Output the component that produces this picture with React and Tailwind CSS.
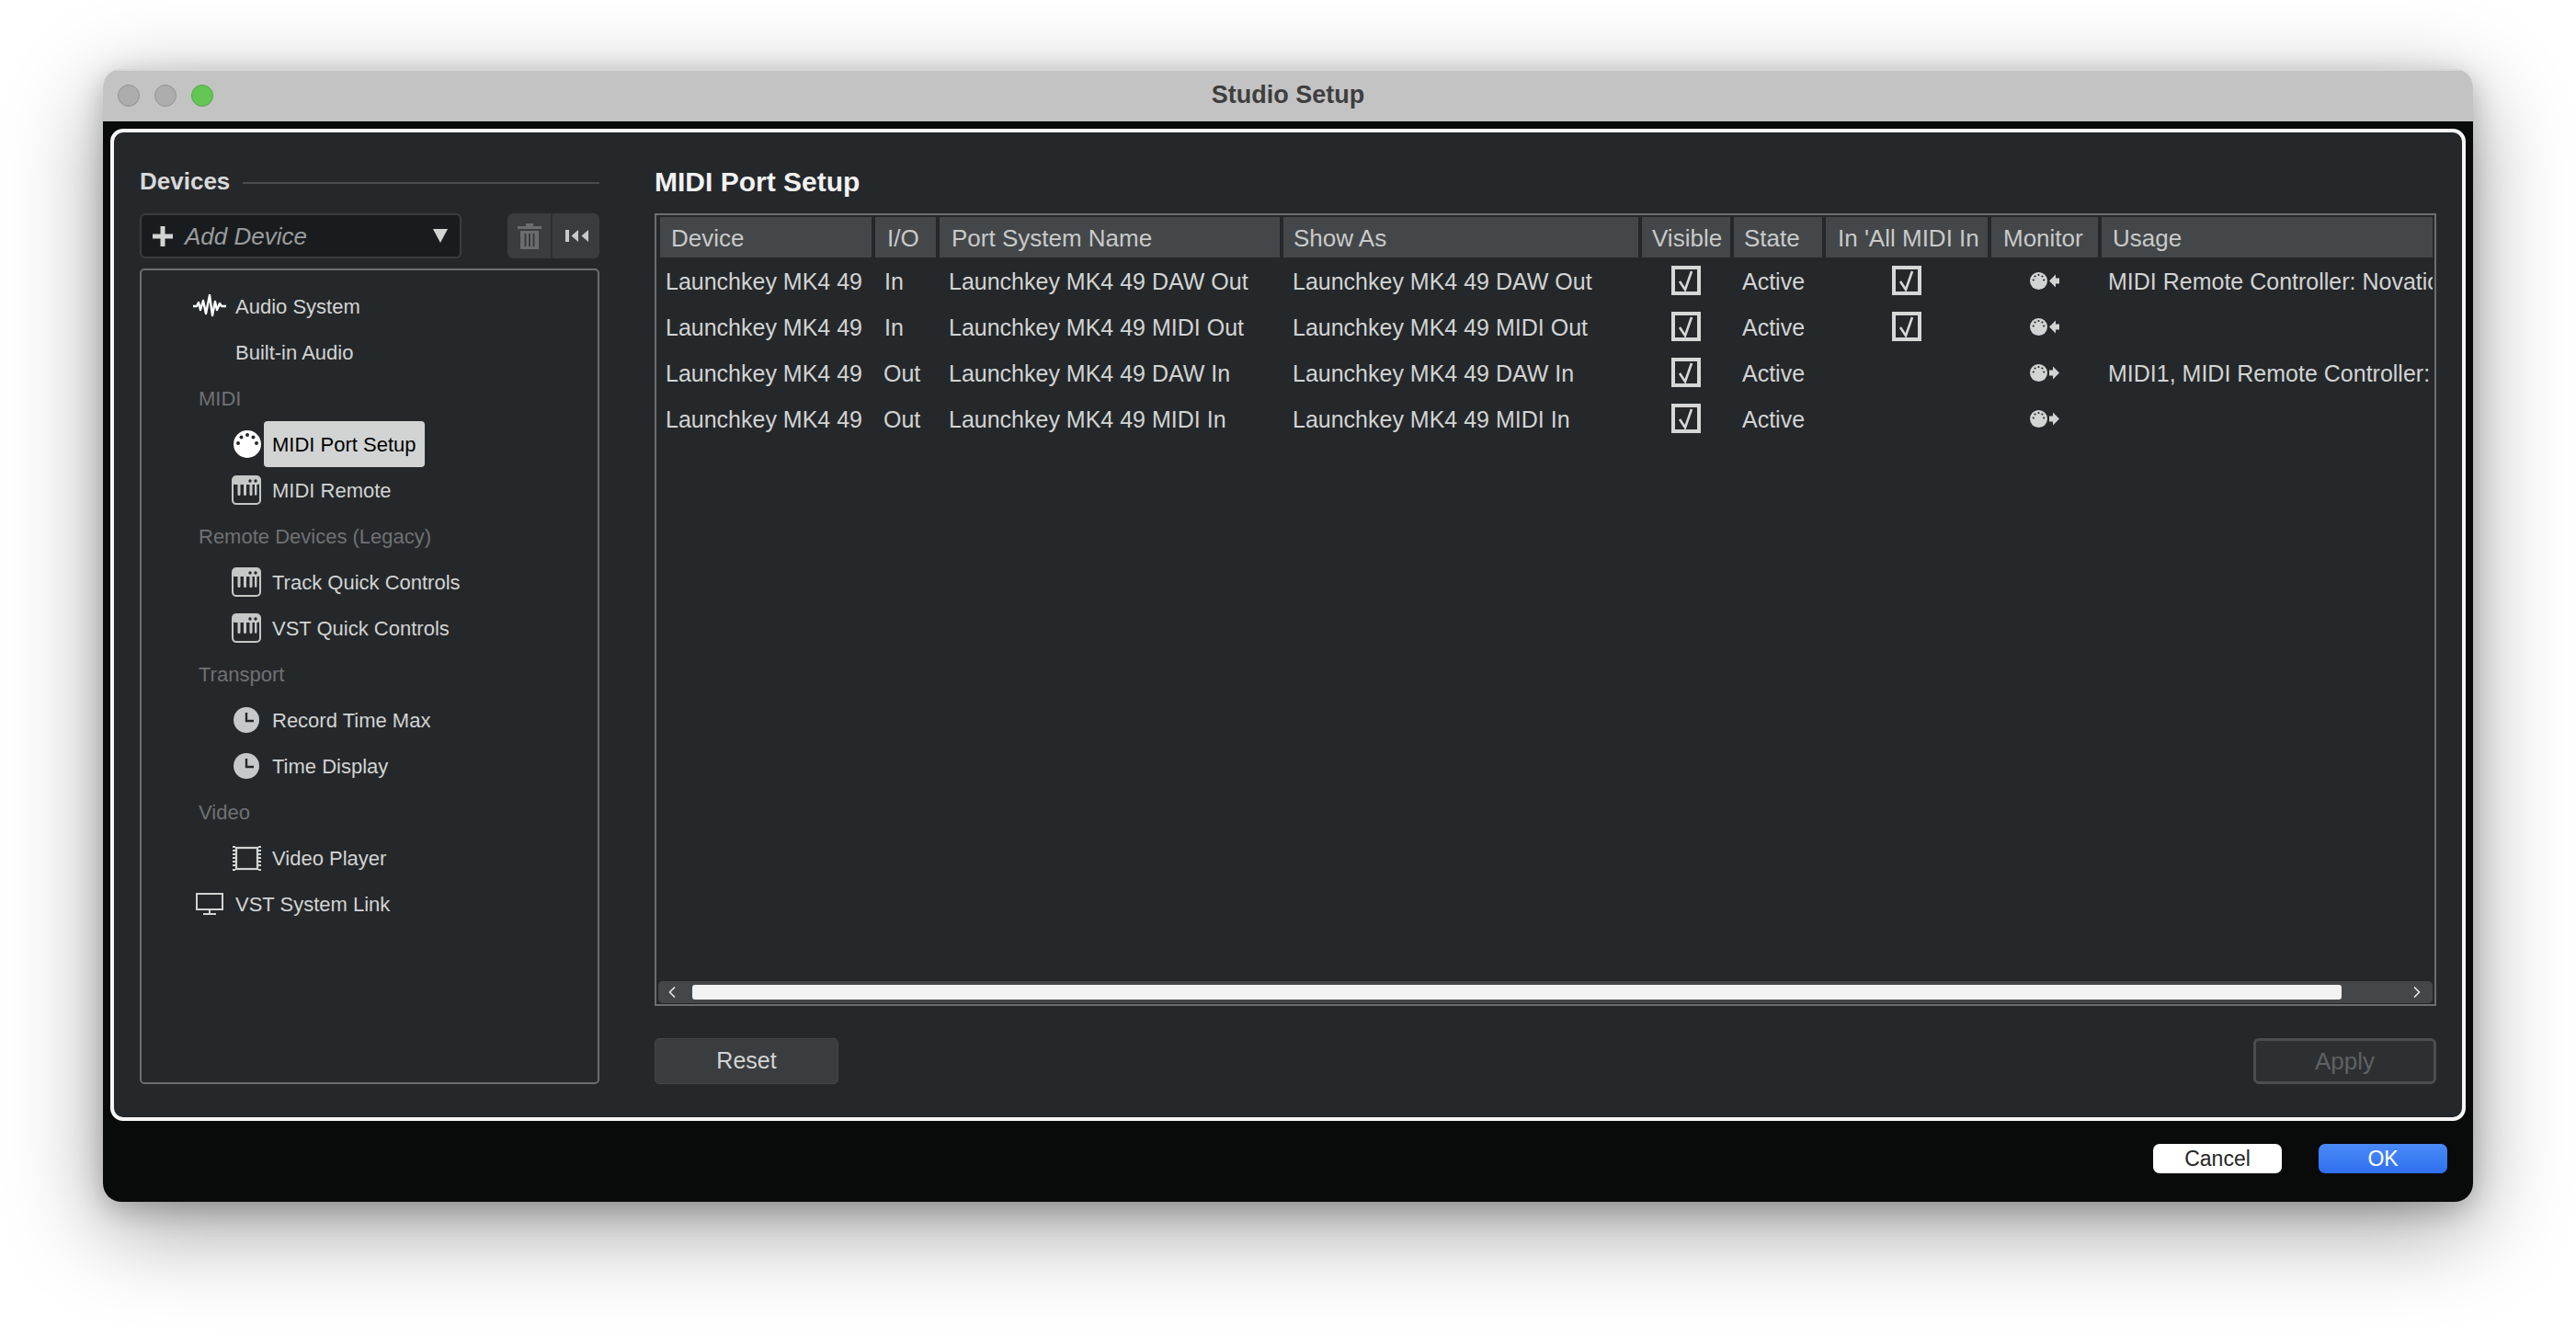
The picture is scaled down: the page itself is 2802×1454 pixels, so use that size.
import React from 'react';

const ports = [
  { name: 'Launchkey MK4 49 DAW Out', io: 'In', all: true, usage: 'MIDI Remote Controller: Novation Launchkey MK4' },
  { name: 'Launchkey MK4 49 MIDI Out', io: 'In', all: true, usage: '' },
  { name: 'Launchkey MK4 49 DAW In', io: 'Out', all: false, usage: 'MIDI1, MIDI Remote Controller: Novation Launchkey MK4' },
  { name: 'Launchkey MK4 49 MIDI In', io: 'Out', all: false, usage: '' },
];

function WaveIcon() {
  return (
    <svg width="36" height="26" viewBox="0 0 36 26" fill="none" stroke="#fff" strokeWidth="2.4" strokeLinejoin="round">
      <path d="M0 13h4l2-4 2 8 3-10 3 14 4-20 3 22 3-15 2 9 3-7 2 3h5" />
    </svg>
  );
}

function MidiIcon() {
  return (
    <svg width="32" height="32" viewBox="0 0 32 32">
      <circle cx="17" cy="16" r="15" fill="#fff" />
      <circle cx="7" cy="15" r="2" fill="#25282b" />
      <circle cx="10.5" cy="8.5" r="2" fill="#25282b" />
      <circle cx="17" cy="6" r="2" fill="#25282b" />
      <circle cx="23.5" cy="8.5" r="2" fill="#25282b" />
      <circle cx="27" cy="15" r="2" fill="#25282b" />
    </svg>
  );
}

function PianoIcon() {
  return (
    <svg width="32" height="32" viewBox="0 0 32 32">
      <rect x="1" y="1" width="30" height="30" rx="4" fill="none" stroke="#c6c8c7" strokeWidth="2" />
      <rect x="1" y="1" width="30" height="9" rx="3" fill="#c6c8c7" />
      <path d="M6.5 9h3v11.5a1.5 1.5 0 0 1-3 0zM13 9h3v11.5a1.5 1.5 0 0 1-3 0zM19.5 9h3v11.5a1.5 1.5 0 0 1-3 0zM25 9h2.4v11.5a1.2 1.2 0 0 1-2.4 0z" fill="#c6c8c7" />
      <circle cx="20" cy="6" r="1.7" fill="#25282b" />
      <circle cx="26" cy="6" r="1.7" fill="#25282b" />
    </svg>
  );
}

function ClockIcon() {
  return (
    <svg width="28" height="28" viewBox="0 0 28 28">
      <circle cx="14" cy="14" r="14" fill="#c6c8ca" />
      <path d="M14 6v9h8" fill="none" stroke="#25282b" strokeWidth="2.4" />
    </svg>
  );
}

function FilmIcon() {
  return (
    <svg width="31" height="29" viewBox="0 0 31 29" fill="none" stroke="#d2d4d3" strokeWidth="2.2">
      <rect x="4" y="3" width="23" height="23" />
      <path d="M0 2h3M0 6h3M0 10h3M0 14h3M0 18h3M0 22h3M0 27h3M28 2h3M28 6h3M28 10h3M28 14h3M28 18h3M28 22h3M28 27h3" />
    </svg>
  );
}

function ScreenIcon() {
  return (
    <svg width="30" height="24" viewBox="0 0 30 24" fill="none" stroke="#d2d4d3" strokeWidth="2">
      <rect x="1" y="1" width="28" height="17" />
      <path d="M15 18v4M8 23h14" />
    </svg>
  );
}

function TreeGroup({ children }) {
  return <div className="h-[50px] flex items-center pl-[62px] text-[#6f7173]">{children}</div>;
}

function TreeTop({ icon, children }) {
  return (
    <div className="h-[50px] flex items-center pl-[56px]">
      <span className="w-[36px] flex justify-center">{icon}</span>
      <span className="ml-[10px]">{children}</span>
    </div>
  );
}

function TreeItem({ icon, active, children }) {
  return (
    <div className="h-[50px] flex items-center pl-[98px]">
      <span className="w-[32px] flex justify-center">{icon}</span>
      <span className={`ml-[3px] h-[50px] flex items-center px-[9px] rounded-[4px] ${active ? 'bg-[#d2d4d3] text-black' : ''}`}>
        {children}
      </span>
    </div>
  );
}

function Check() {
  return (
    <span className="w-[32px] h-[32px] border-[4px] border-[#d6d8d7] flex items-center justify-center">
      <svg width="18" height="24" viewBox="0 0 18 24" fill="none" stroke="#d6d8d7" strokeWidth="2.6">
        <path d="M2 13l6 9 7-20" />
      </svg>
    </span>
  );
}

function MonitorIcon({ out }) {
  return (
    <svg width="32" height="19" viewBox="0 0 32 19">
      <circle cx="9.5" cy="9.5" r="9.5" fill="#d2d4d3" />
      <circle cx="3.8" cy="8.5" r="1.1" fill="#25282b" />
      <circle cx="5.6" cy="4.5" r="1.1" fill="#25282b" />
      <circle cx="9.5" cy="3" r="1.1" fill="#25282b" />
      <circle cx="13.4" cy="4.5" r="1.1" fill="#25282b" />
      <circle cx="15.2" cy="8.5" r="1.1" fill="#25282b" />
      {out ? (
        <path d="M21 6.5h4V2.5l7 7-7 7v-4h-4z" fill="#d2d4d3" />
      ) : (
        <path d="M32 6.5h-4V2.5l-7 7 7 7v-4h4z" fill="#d2d4d3" />
      )}
    </svg>
  );
}

function Head({ className = '', children }) {
  return <div className={`h-[44px] pt-[3px] bg-[#44474a] flex items-center text-[26px] text-[#c8cac9] overflow-hidden whitespace-nowrap ${className}`}>{children}</div>;
}

export default function App() {
  return (
    <div className="w-[2802px] h-[1454px] bg-white pt-[75px] pl-[112px] overflow-hidden font-['Liberation_Sans',Arial,sans-serif]">
      <div className="w-[2578px] h-[1232px] flex flex-col rounded-[20px] overflow-hidden shadow-[0_28px_100px_rgba(0,0,0,0.38),0_8px_30px_rgba(0,0,0,0.22)]">
        {/* title bar */}
        <div className="relative h-[57px] shrink-0 bg-[#c3c3c3] border-t-2 border-[#d8d8d8] flex items-center justify-center">
          <div className="absolute left-[16px] top-[15px] flex gap-[16px]">
            <span className="w-[24px] h-[24px] rounded-full bg-[#adadad] border border-[#939393]"></span>
            <span className="w-[24px] h-[24px] rounded-full bg-[#adadad] border border-[#939393]"></span>
            <span className="w-[24px] h-[24px] rounded-full bg-[#62c554] border border-[#52a845]"></span>
          </div>
          <span className="mb-[2px] text-[27px] font-bold text-[#3e3e3e]">Studio Setup</span>
        </div>

        <div className="flex-1 flex flex-col bg-[#090a0a] px-[8px] pt-[8px]">
          <div className="h-[1079px] shrink-0 flex border-[4px] border-[#f6f6f6] rounded-[14px] bg-[#25282b] pl-[28px] pr-[28px] pb-[36px]">
            {/* devices column */}
            <div className="w-[500px] shrink-0 flex flex-col pt-[36px]">
              <div className="h-[34px] flex items-center gap-[14px] mb-[18px]">
                <span className="text-[26px] font-bold text-[#d8d9d9]">Devices</span>
                <span className="flex-1 h-[2px] mt-[4px] bg-[#4a4d50]"></span>
              </div>
              <div className="h-[49px] flex justify-between mb-[11px]">
                <div className="w-[350px] flex items-center bg-[#191c1f] border-2 border-[#3a3d40] rounded-[6px] pl-[12px] pr-[13px]">
                  <svg width="22" height="22" viewBox="0 0 22 22" fill="#d2d4d3">
                    <path d="M8.5 0h5v8.5H22v5h-8.5V22h-5v-8.5H0v-5h8.5z" />
                  </svg>
                  <span className="ml-[13px] pt-[2px] flex-1 italic text-[26px] text-[#9a9c9d]">Add Device</span>
                  <svg width="16" height="15" viewBox="0 0 16 15" fill="#d2d4d3">
                    <path d="M0 0h16L8 15z" />
                  </svg>
                </div>
                <div className="w-[100px] flex rounded-[6px] overflow-hidden bg-[#3a3d40]">
                  <div className="w-[49px] flex items-center justify-center border-r-2 border-[#2c2f32]">
                    <svg width="26" height="28" viewBox="0 0 26 28" fill="#6a6c6f">
                      <path d="M9 0h8v3h9v3H0V3h9z" />
                      <path d="M3 8h20v20H3zM7.5 11v14h2V11zM12 11v14h2V11zM16.5 11v14h2V11z" fillRule="evenodd" />
                    </svg>
                  </div>
                  <div className="flex-1 pl-[2px] flex items-center justify-center">
                    <svg width="25" height="13" viewBox="0 0 25 13" fill="#c8c9c9">
                      <path d="M0 0h4v13H0zM14 0v13L6.5 6.5zM25 0v13l-7.5-6.5z" />
                    </svg>
                  </div>
                </div>
              </div>
              <div className="flex-1 border-2 border-[#6b6d70] rounded-[5px] pt-[14px] text-[22px] text-[#d2d4d3]">
                <TreeTop icon={<WaveIcon />}>Audio System</TreeTop>
                <TreeTop>Built-in Audio</TreeTop>
                <TreeGroup>MIDI</TreeGroup>
                <TreeItem icon={<MidiIcon />} active>MIDI Port Setup</TreeItem>
                <TreeItem icon={<PianoIcon />}>MIDI Remote</TreeItem>
                <TreeGroup>Remote Devices (Legacy)</TreeGroup>
                <TreeItem icon={<PianoIcon />}>Track Quick Controls</TreeItem>
                <TreeItem icon={<PianoIcon />}>VST Quick Controls</TreeItem>
                <TreeGroup>Transport</TreeGroup>
                <TreeItem icon={<ClockIcon />}>Record Time Max</TreeItem>
                <TreeItem icon={<ClockIcon />}>Time Display</TreeItem>
                <TreeGroup>Video</TreeGroup>
                <TreeItem icon={<FilmIcon />}>Video Player</TreeItem>
                <TreeTop icon={<ScreenIcon />}>VST System Link</TreeTop>
              </div>
            </div>

            {/* port table */}
            <div className="flex-1 ml-[60px] flex flex-col pt-[36px]">
              <div className="h-[34px] mb-[18px] flex items-center text-[30px] font-bold text-[#f2f2f2]">MIDI Port Setup</div>
              <div className="flex-1 flex flex-col border-2 border-[#6b6d70] pt-[2px] px-[2px] pb-[1px]">
                <div className="flex-1 pl-[2px] text-[25px] text-[#d2d4d3] overflow-hidden">
                  <div className="grid grid-cols-[230px_66px_370px_386px_96px_96px_176px_116px_360px] gap-x-[4px]">
                    <Head className="pl-[12px]">Device</Head>
                    <Head className="pl-[13px]">I/O</Head>
                    <Head className="pl-[13px]">Port System Name</Head>
                    <Head className="pl-[11px]">Show As</Head>
                    <Head className="pl-[11px]">Visible</Head>
                    <Head className="pl-[11px]">State</Head>
                    <Head className="pl-[13px]">In 'All MIDI In</Head>
                    <Head className="pl-[13px]">Monitor</Head>
                    <Head className="pl-[12px]">Usage</Head>
                  </div>
                  {ports.map((p) => (
                    <div key={p.name} className="h-[50px] grid grid-cols-[230px_66px_370px_386px_96px_96px_176px_116px_360px] gap-x-[4px] items-center whitespace-nowrap">
                      <div className="pl-[6px] pt-[3px]">Launchkey MK4 49</div>
                      <div className={p.io === 'In' ? 'pl-[10px] pt-[3px]' : 'pl-[9px] pt-[3px]'}>{p.io}</div>
                      <div className="pl-[10px] pt-[3px]">{p.name}</div>
                      <div className="pl-[10px] pt-[3px]">{p.name}</div>
                      <div className="flex justify-center"><Check /></div>
                      <div className="pl-[9px] pt-[3px]">Active</div>
                      <div className="flex justify-center">{p.all && <Check />}</div>
                      <div className="flex justify-center"><MonitorIcon out={p.io === 'Out'} /></div>
                      <div className="pl-[7px] pt-[3px] overflow-hidden">{p.usage}</div>
                    </div>
                  ))}
                </div>
                {/* scrollbar */}
                <div className="h-[24px] shrink-0 flex items-center rounded-[5px] bg-[#44474a]">
                  <div className="w-[37px] pl-[11px] flex items-center">
                    <svg width="8" height="12" viewBox="0 0 8 12" fill="none" stroke="#e6e6e6" strokeWidth="1.6">
                      <path d="M7 0.5L1.5 6 7 11.5" />
                    </svg>
                  </div>
                  <div className="w-[1794px] h-[16px] rounded-[3px] bg-[#f2f2f2]"></div>
                  <div className="flex-1 flex justify-end pr-[13px]">
                    <svg width="8" height="12" viewBox="0 0 8 12" fill="none" stroke="#e6e6e6" strokeWidth="1.6">
                      <path d="M1 0.5L6.5 6 1 11.5" />
                    </svg>
                  </div>
                </div>
              </div>
              <div className="mt-[35px] flex justify-between">
                <button className="w-[200px] h-[50px] rounded-[5px] bg-[#3a3d40] border border-[#43464a] text-[25px] text-[#d2d4d3]">Reset</button>
                <button className="w-[199px] h-[50px] rounded-[6px] bg-[#2d3033] border-[3px] border-[#4b4e51] text-[26px] text-[#5f6265]">Apply</button>
              </div>
            </div>
          </div>

          <div className="flex justify-end gap-[40px] pt-[25px] pr-[20px]">
            <button className="w-[140px] h-[32px] rounded-[7px] bg-white text-[23px] leading-none text-[#262626]">Cancel</button>
            <button className="w-[140px] h-[32px] rounded-[7px] bg-gradient-to-b from-[#4a8af8] to-[#2f6fee] text-[23px] leading-none text-white">OK</button>
          </div>
        </div>
      </div>
    </div>
  );
}
